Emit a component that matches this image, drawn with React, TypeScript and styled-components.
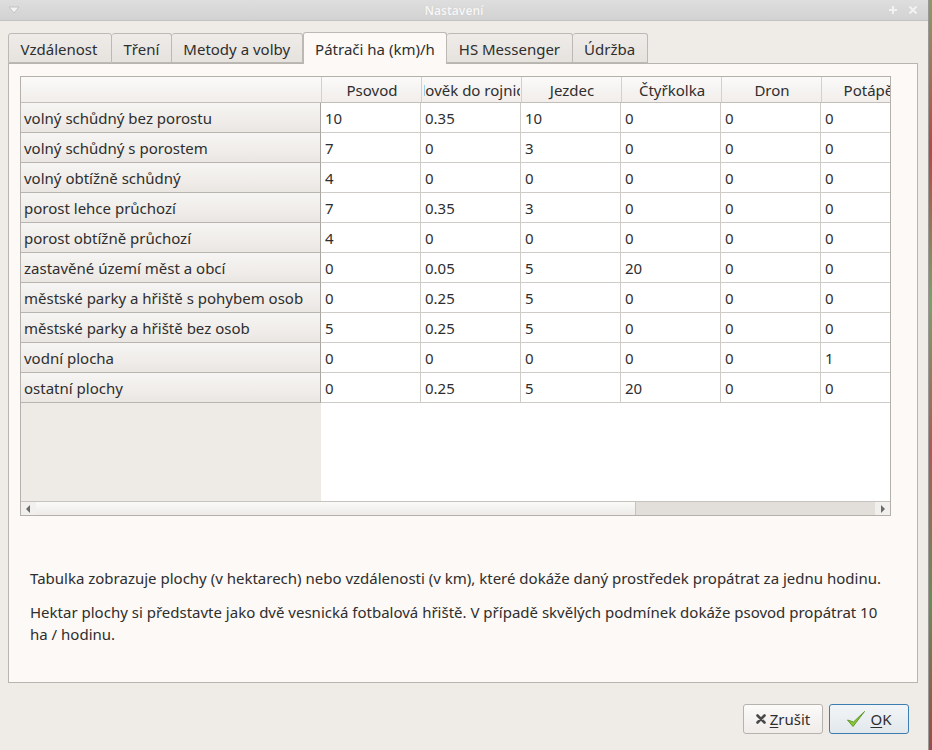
import React from 'react';
import styled, { createGlobalStyle } from 'styled-components';

const GlobalStyle = createGlobalStyle`
  html, body {
    margin: 0;
    padding: 0;
    width: 932px;
    height: 750px;
    overflow: hidden;
    background: #6a7a5a;
  }
  * { box-sizing: border-box; }
`;

const Desktop = styled.div`
  display: flex;
  width: 932px;
  height: 750px;
`;

const Edge = styled.div`
  width: 3px;
  background: linear-gradient(180deg, #8a9a6a 0%, #b04a4a 20%, #7aa06a 40%, #a85a5a 60%, #6a8a5a 80%, #9a4a4a 100%);
`;

const Window = styled.div`
  width: 929px;
  height: 750px;
  display: flex;
  flex-direction: column;
  background: #efebe7;
  font-family: 'Noto Sans', 'Open Sans', sans-serif;
  font-size: 15px;
  color: #2e2e2e;
  border-right: 1px solid #9a9894;
`;

const TitleBar = styled.div`
  height: 21px;
  flex: none;
  display: flex;
  align-items: center;
  padding: 0 10px 0 8px;
  background: linear-gradient(180deg, #dedede 0%, #d2d2d2 100%);
  border-bottom: 1px solid #c4c4c4;
`;

const Title = styled.div`
  flex: 1;
  text-align: center;
  font-size: 12px;
  font-weight: 600;
  color: #f7f7f7;
  text-shadow: 0 0 1px #bdbdbd;
`;

const TitleIcons = styled.div`
  display: flex;
  gap: 10px;
  align-items: center;
`;

const Body = styled.div`
  flex: 1;
  display: flex;
  flex-direction: column;
  padding: 11px 10px 0 8px;
`;

const TabBar = styled.div`
  display: flex;
  align-items: flex-end;
  height: 31px;
  position: relative;
  z-index: 1;
`;

const Tab = styled.div<{ $active?: boolean; $first?: boolean }>`
  height: ${p => (p.$active ? '32px' : '30px')};
  padding: 0 ${p => (p.$first ? '13.5px' : '11.5px')} 0 11.5px;
  display: flex;
  align-items: center;
  padding-top: ${p => (p.$active ? '0' : '1px')};
  margin-bottom: ${p => (p.$active ? '-1px' : '0')};
  background: ${p => (p.$active ? '#fcf9f6' : 'linear-gradient(180deg, #eeebe8 0%, #e6e3df 100%)')};
  border: 1px solid #bcb8b4;
  border-bottom: ${p => (p.$active ? 'none' : '1px solid #bcb8b4')};
  border-left: ${p => (p.$first || p.$active ? '1px solid #bcb8b4' : 'none')};
  border-radius: 3px 3px 0 0;
  color: #2e2e2e;
  white-space: nowrap;
`;

const Pane = styled.div`
  height: 620px;
  border: 1px solid #b8b4b0;
  background: #fcf9f6;
  display: flex;
  flex-direction: column;
  padding: 12px 0 0 11px;
`;

const TableFrame = styled.div`
  width: 871px;
  height: 440px;
  border: 1px solid #b4b0ac;
  display: flex;
  flex-direction: column;
  background: #ffffff;
  overflow: hidden;
`;

const Viewport = styled.div`
  flex: 1;
  display: flex;
  flex-direction: column;
  overflow: hidden;
`;

const Row = styled.div`
  display: flex;
  flex: none;
`;

const HeaderRow = styled(Row)`
  height: 26px;
  background: linear-gradient(180deg, #fbfaf9 0%, #f1eeeb 100%);
  border-bottom: 1px solid #c2beba;
`;

const Corner = styled.div`
  width: 300px;
  flex: none;
`;

const ColHeader = styled.div`
  width: 100px;
  flex: none;
  display: flex;
  padding: 0 1px 0 2px;
  border-left: 1px solid #d4d0cc;
  &:first-of-type { border-left: none; }
`;

const HeaderLabel = styled.div`
  flex: 1;
  display: flex;
  justify-content: center;
  align-items: center;
  overflow: hidden;
  white-space: nowrap;
`;

const RowHeader = styled.div`
  width: 300px;
  flex: none;
  height: 30px;
  display: flex;
  align-items: center;
  padding-left: 3px;
  white-space: nowrap;
  background: linear-gradient(180deg, #f7f5f3 0%, #eae7e3 100%);
  border-bottom: 1px solid #b8b4b0;
  border-right: 1px solid #aaa6a2;
`;

const Cell = styled.div`
  width: 100px;
  flex: none;
  height: 30px;
  display: flex;
  align-items: center;
  padding-left: 4px;
  border-right: 1px solid #cfcbc7;
  border-bottom: 1px solid #cfcbc7;
  background: #ffffff;
`;

const EmptyArea = styled.div`
  flex: 1;
  display: flex;
`;

const EmptyHeader = styled.div`
  width: 300px;
  background: #eeebe7;
`;

const ScrollBar = styled.div`
  height: 14px;
  flex: none;
  display: flex;
  border-top: 1px solid #c6c2be;
  background: #e2dfdb;
`;

const ScrollArrow = styled.div`
  width: 15px;
  display: flex;
  align-items: center;
  justify-content: center;
  background: #f2f0ee;
`;

const ScrollHandle = styled.div`
  width: 600px;
  background: linear-gradient(180deg, #fafaf9 0%, #eeebe8 100%);
  border-right: 1px solid #c6c2be;
`;

const ScrollTrough = styled.div`
  flex: 1;
`;

const Notes = styled.div`
  padding: 51px 20px 0 10px;
  display: flex;
  flex-direction: column;
  gap: 12px;
  line-height: 22px;
`;

const Para = styled.p`
  margin: 0;
`;

const ButtonRow = styled.div`
  display: flex;
  justify-content: flex-end;
  gap: 6px;
  padding: 21px 9px 0 0;
`;

const Button = styled.button<{ $primary?: boolean }>`
  height: 30px;
  min-width: 80px;
  padding: 0 10px;
  display: flex;
  align-items: center;
  justify-content: center;
  gap: 4px;
  font-family: 'Noto Sans', 'Open Sans', sans-serif;
  font-size: 15px;
  color: #2e2e2e;
  border-radius: 3px;
  border: 1px solid ${p => (p.$primary ? '#3c7eb0' : '#b6b2ae')};
  background: ${p => (p.$primary ? 'linear-gradient(180deg, #f2f5f7 0%, #e2e8ec 100%)' : 'linear-gradient(180deg, #fcfbfa 0%, #efecea 100%)')};
  u { text-decoration: underline; text-underline-offset: 2px; }
`;

const columns = ['Psovod', 'Člověk do rojnice', 'Jezdec', 'Čtyřkolka', 'Dron', 'Potápěč'];

const rows: [string, string[]][] = [
  ['volný schůdný bez porostu', ['10', '0.35', '10', '0', '0', '0']],
  ['volný schůdný s porostem', ['7', '0', '3', '0', '0', '0']],
  ['volný obtížně schůdný', ['4', '0', '0', '0', '0', '0']],
  ['porost lehce průchozí', ['7', '0.35', '3', '0', '0', '0']],
  ['porost obtížně průchozí', ['4', '0', '0', '0', '0', '0']],
  ['zastavěné území měst a obcí', ['0', '0.05', '5', '20', '0', '0']],
  ['městské parky a hřiště s pohybem osob', ['0', '0.25', '5', '0', '0', '0']],
  ['městské parky a hřiště bez osob', ['5', '0.25', '5', '0', '0', '0']],
  ['vodní plocha', ['0', '0', '0', '0', '0', '1']],
  ['ostatní plochy', ['0', '0.25', '5', '20', '0', '0']],
];

const tabs = ['Vzdálenost', 'Tření', 'Metody a volby', 'Pátrači ha (km)/h', 'HS Messenger', 'Údržba'];

const App: React.FC = () => {
  return (
    <>
      <GlobalStyle />
      <Desktop>
        <Window>
          <TitleBar>
            <svg width="12" height="8" viewBox="0 0 12 8">
              <path d="M1 1 H11 L6 7 Z" fill="#f4f4f4" stroke="#c2c2c2" strokeWidth="1" />
            </svg>
            <Title>Nastavení</Title>
            <TitleIcons>
              <svg width="10" height="10" viewBox="0 0 10 10">
                <path d="M5 1 V9 M1 5 H9" stroke="#f2f2f2" strokeWidth="2" />
              </svg>
              <svg width="10" height="10" viewBox="0 0 10 10">
                <path d="M1.5 1.5 L8.5 8.5 M8.5 1.5 L1.5 8.5" stroke="#f2f2f2" strokeWidth="2" />
              </svg>
            </TitleIcons>
          </TitleBar>
          <Body>
            <TabBar>
              {tabs.map((t, i) => (
                <Tab key={t} $active={i === 3} $first={i === 0}>
                  {t}
                </Tab>
              ))}
            </TabBar>
            <Pane>
              <TableFrame>
                <Viewport>
                  <HeaderRow>
                    <Corner />
                    {columns.map(c => (
                      <ColHeader key={c}>
                        <HeaderLabel>{c}</HeaderLabel>
                      </ColHeader>
                    ))}
                  </HeaderRow>
                  {rows.map(([label, vals]) => (
                    <Row key={label}>
                      <RowHeader>{label}</RowHeader>
                      {vals.map((v, i) => (
                        <Cell key={i}>{v}</Cell>
                      ))}
                    </Row>
                  ))}
                  <EmptyArea>
                    <EmptyHeader />
                  </EmptyArea>
                </Viewport>
                <ScrollBar>
                  <ScrollArrow>
                    <svg width="5" height="8" viewBox="0 0 5 8">
                      <path d="M4 0 L0 4 L4 8 Z" fill="#6a6a6a" />
                    </svg>
                  </ScrollArrow>
                  <ScrollHandle />
                  <ScrollTrough />
                  <ScrollArrow>
                    <svg width="5" height="8" viewBox="0 0 5 8">
                      <path d="M1 0 L5 4 L1 8 Z" fill="#6a6a6a" />
                    </svg>
                  </ScrollArrow>
                </ScrollBar>
              </TableFrame>
              <Notes>
                <Para>
                  Tabulka zobrazuje plochy (v hektarech) nebo vzdálenosti (v km), které dokáže daný prostředek propátrat za jednu hodinu.
                </Para>
                <Para>
                  Hektar plochy si představte jako dvě vesnická fotbalová hřiště. V případě skvělých podmínek dokáže psovod propátrat 10 ha / hodinu.
                </Para>
              </Notes>
            </Pane>
            <ButtonRow>
              <Button>
                <svg width="10" height="10" viewBox="0 0 10 10">
                  <path d="M1.5 1.5 L8.5 8.5 M8.5 1.5 L1.5 8.5" stroke="#4a4a4a" strokeWidth="2.6" strokeLinecap="round" />
                </svg>
                <span><u>Z</u>rušit</span>
              </Button>
              <Button $primary>
                <svg width="20" height="18" viewBox="0 0 20 18">
                  <path d="M1.5 10 L7 16.5 L18.5 1.5 L7.5 12 Z" fill="#8cc63e" stroke="#5f9a26" strokeWidth="1" strokeLinejoin="round" />
                </svg>
                <span><u>O</u>K</span>
              </Button>
            </ButtonRow>
          </Body>
        </Window>
        <Edge />
      </Desktop>
    </>
  );
};

export default App;
